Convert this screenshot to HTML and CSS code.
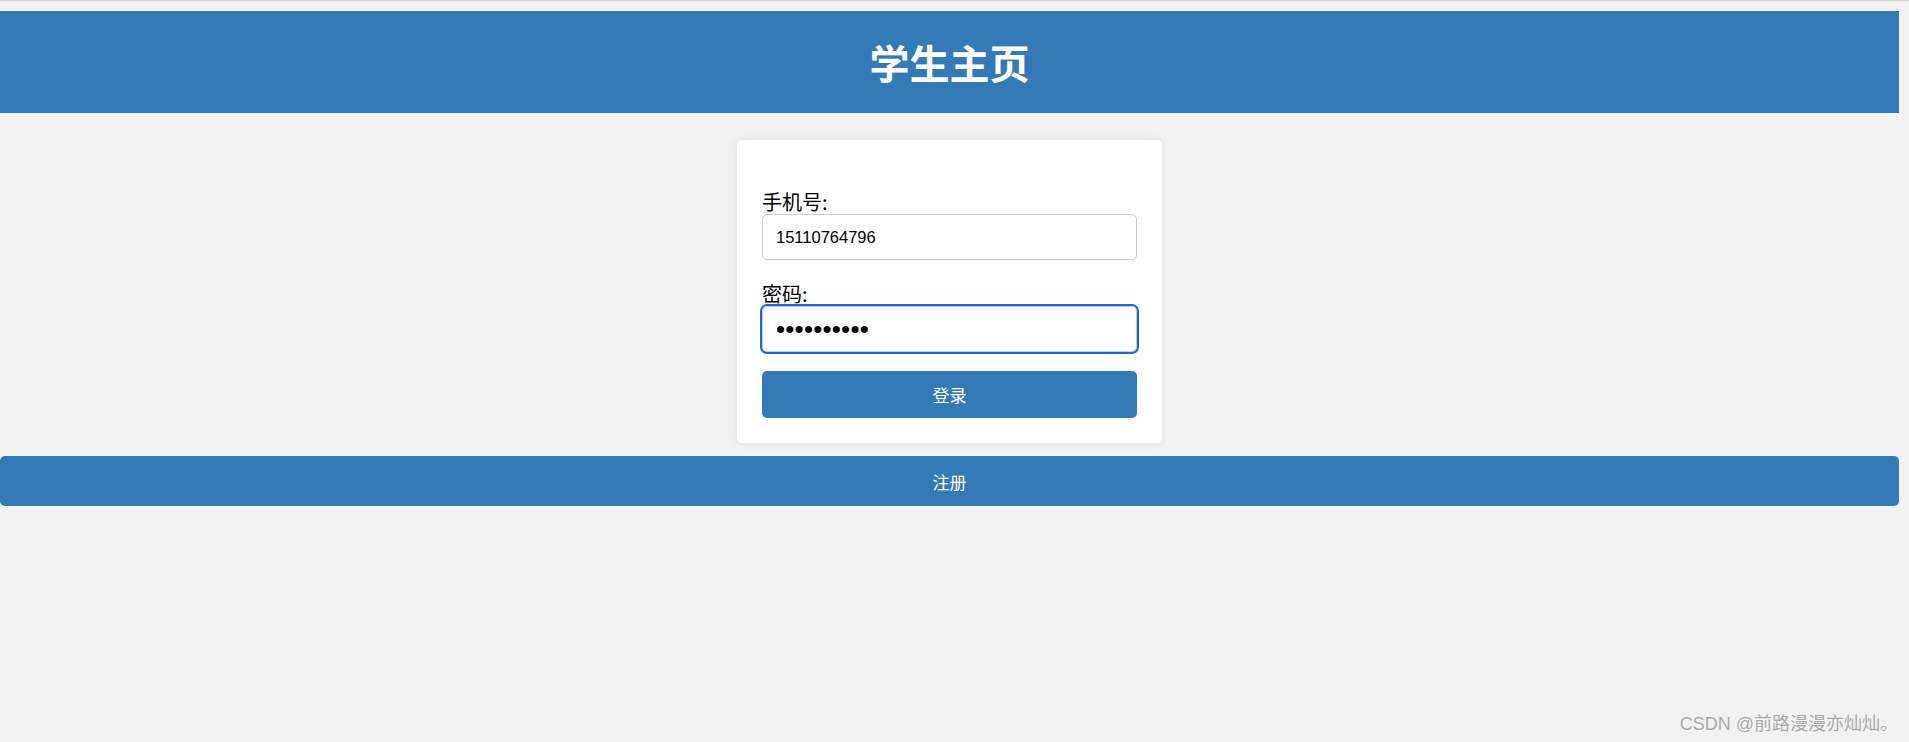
FILE: index.html
```html
<!DOCTYPE html>
<html lang="zh-CN">

<head>
    <meta charset="UTF-8">
    <title>学生主页</title>
    <link rel="stylesheet" href="styles.css">
</head>

<body>
    <div class="page">
        <div class="header">
            <h1>学生主页</h1>
        </div>

        <!-- 登录表单 -->
        <div class="card">
            <form action="">
                <div class="group">
                    <label for="phone">手机号:</label>
                    <input type="text" id="phone" name="phone" value="15110764796" />
                </div>
                <div class="group last">
                    <label for="pass">密码:</label>
                    <input type="password" id="pass" name="pass" value="1234567890" class="pass focus" />
                </div>
                <input type="button" value="登录" class="btn" />
            </form>
        </div>

        <input type="button" value="注册" class="btn reg" />
    </div>

    <div class="mark">CSDN @前路漫漫亦灿灿。</div>
</body>

</html>
```

FILE: styles.css
```css
html {
    background: #f2f2f2;
}

body {
    margin: 0;
    padding: 0;
    border-top: 1px solid #d2d2d2;
    font-family: "Liberation Sans", "Noto Sans CJK SC", sans-serif;
    color: #000;
}

.page {
    width: 1899px;
    padding-top: 10px;
}

.header {
    height: 102px;
    background: #337ab7;
    display: flex;
    align-items: center;
    justify-content: center;
}

.header h1 {
    margin: 0;
    color: #fff;
    font-family: "Noto Sans CJK SC", sans-serif;
    font-size: 40px;
    font-weight: bold;
    line-height: 48px;
}

.card {
    width: 375px;
    margin: 27px auto 0;
    padding: 50px 25px 25px;
    background: #fff;
    border-radius: 5px;
    box-shadow: 0 0 10px rgba(0, 0, 0, 0.08);
}

.group {
    margin-bottom: 22px;
}

.group.last {
    margin-bottom: 19px;
}

.group label {
    display: block;
    font-family: "Noto Sans CJK SC", sans-serif;
    font-size: 20px;
    line-height: 24px;
}

.group input {
    display: block;
    box-sizing: border-box;
    width: 375px;
    height: 46px;
    margin: 0;
    padding: 0 13px;
    border: 1px solid #ccc;
    border-radius: 5px;
    background: #fff;
    font-family: "Liberation Sans", sans-serif;
    font-size: 16.5px;
    color: #000;
}

.group input.pass {
    font-size: 26px;
    letter-spacing: 0.2px;
}

.group input.focus {
    outline: 2px solid #1b66d6;
    outline-offset: 0;
}

.btn {
    display: block;
    box-sizing: border-box;
    width: 375px;
    height: 47px;
    margin: 0;
    border: 0;
    border-radius: 5px;
    background: #337ab7;
    color: #fff;
    font-family: "Noto Sans CJK SC", sans-serif;
    font-size: 17px;
    cursor: pointer;
}

.btn.reg {
    width: 100%;
    height: 50px;
    margin-top: 13px;
}

.mark {
    position: absolute;
    right: 11px;
    top: 713px;
    font-family: "Liberation Sans", "Noto Sans CJK SC", sans-serif;
    font-size: 18px;
    line-height: 22px;
    color: #a8a8a8;
    text-shadow: 0 1px 1px rgba(255, 255, 255, 0.8);
}
```
